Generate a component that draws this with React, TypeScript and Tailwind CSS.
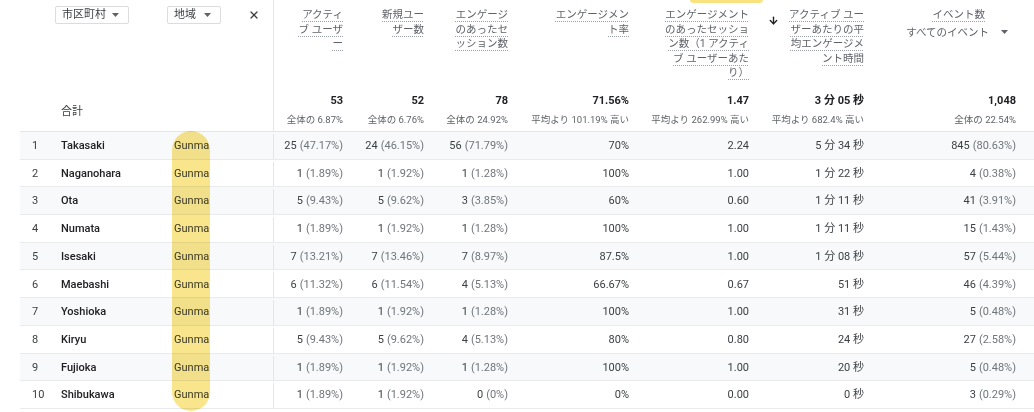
import { ArrowDown, X } from "lucide-react";

type Row = {
  n: number;
  city: string;
  cells: [string, string][];
};

const rows: Row[] = [
  { n: 1, city: "Takasaki", cells: [["25", "(47.17%)"], ["24", "(46.15%)"], ["56", "(71.79%)"], ["70%", ""], ["2.24", ""], ["5 分 34 秒", ""], ["845", "(80.63%)"]] },
  { n: 2, city: "Naganohara", cells: [["1", "(1.89%)"], ["1", "(1.92%)"], ["1", "(1.28%)"], ["100%", ""], ["1.00", ""], ["1 分 22 秒", ""], ["4", "(0.38%)"]] },
  { n: 3, city: "Ota", cells: [["5", "(9.43%)"], ["5", "(9.62%)"], ["3", "(3.85%)"], ["60%", ""], ["0.60", ""], ["1 分 11 秒", ""], ["41", "(3.91%)"]] },
  { n: 4, city: "Numata", cells: [["1", "(1.89%)"], ["1", "(1.92%)"], ["1", "(1.28%)"], ["100%", ""], ["1.00", ""], ["1 分 11 秒", ""], ["15", "(1.43%)"]] },
  { n: 5, city: "Isesaki", cells: [["7", "(13.21%)"], ["7", "(13.46%)"], ["7", "(8.97%)"], ["87.5%", ""], ["1.00", ""], ["1 分 08 秒", ""], ["57", "(5.44%)"]] },
  { n: 6, city: "Maebashi", cells: [["6", "(11.32%)"], ["6", "(11.54%)"], ["4", "(5.13%)"], ["66.67%", ""], ["0.67", ""], ["51 秒", ""], ["46", "(4.39%)"]] },
  { n: 7, city: "Yoshioka", cells: [["1", "(1.89%)"], ["1", "(1.92%)"], ["1", "(1.28%)"], ["100%", ""], ["1.00", ""], ["31 秒", ""], ["5", "(0.48%)"]] },
  { n: 8, city: "Kiryu", cells: [["5", "(9.43%)"], ["5", "(9.62%)"], ["4", "(5.13%)"], ["80%", ""], ["0.80", ""], ["24 秒", ""], ["27", "(2.58%)"]] },
  { n: 9, city: "Fujioka", cells: [["1", "(1.89%)"], ["1", "(1.92%)"], ["1", "(1.28%)"], ["100%", ""], ["1.00", ""], ["20 秒", ""], ["5", "(0.48%)"]] },
  { n: 10, city: "Shibukawa", cells: [["1", "(1.89%)"], ["1", "(1.92%)"], ["0", "(0%)"], ["0%", ""], ["0.00", ""], ["0 秒", ""], ["3", "(0.29%)"]] },
];

// widths + right padding of the 7 metric columns
const cols = [
  "w-[78px] pr-[8px] border-l border-[#e3e5e8]",
  "w-[81px] pr-[8px]",
  "w-[84px] pr-[8px]",
  "w-[121px] pr-[8px]",
  "w-[120px] pr-[8px]",
  "w-[115px] pr-[8px]",
  "w-[162px] pr-[18px]",
];

const totals: [string, string][] = [
  ["53", "全体の 6.87%"],
  ["52", "全体の 6.76%"],
  ["78", "全体の 24.92%"],
  ["71.56%", "平均より 101.19% 高い"],
  ["1.47", "平均より 262.99% 高い"],
  ["3 分 05 秒", "平均より 682.4% 高い"],
  ["1,048", "全体の 22.54%"],
];

function Label({ lines }: { lines: string[] }) {
  return (
    <div className="flex flex-col items-end text-[10.5px] leading-[14.5px] text-[#5f6368]">
      {lines.map((l) => (
        <span
          key={l}
          className="whitespace-nowrap underline decoration-dotted decoration-[#9aa0a6] underline-offset-[3px]"
        >
          {l}
        </span>
      ))}
    </div>
  );
}

function Caret() {
  return (
    <svg width="7" height="4" viewBox="0 0 7 4" className="fill-[#5f6368]">
      <path d="M0 0h7L3.5 4z" />
    </svg>
  );
}

export default function App() {
  const labels: React.ReactNode[] = [
    <Label lines={["アクティ", "ブ ユーザ", "ー"]} />,
    <Label lines={["新規ユー", "ザー数"]} />,
    <Label lines={["エンゲージ", "のあったセ", "ッション数"]} />,
    <Label lines={["エンゲージメン", "ト率"]} />,
    <Label lines={["エンゲージメント", "のあったセッショ", "ン数（1 アクティ", "ブ ユーザーあた", "り）"]} />,
    <div className="flex items-start gap-[10px]">
      <ArrowDown className="mt-[7px] h-[11px] w-[11px] text-[#202124]" strokeWidth={3} />
      <Label lines={["アクティブ ユー", "ザーあたりの平", "均エンゲージメ", "ント時間"]} />
    </div>,
    <div className="flex flex-col items-end">
      <div className="mr-[31px]">
        <Label lines={["イベント数"]} />
      </div>
      <div className="mt-[2px] flex items-center gap-[12px] pr-[8px] text-[10.5px] text-[#5f6368]">
        <span>すべてのイベント</span>
        <Caret />
      </div>
    </div>,
  ];

  return (
    <div className="relative h-[412px] w-[1034px] overflow-hidden bg-white font-['Roboto','Noto_Sans_CJK_JP',sans-serif] text-[11px] text-[#3c4043]">
      <div className="ml-[20px] flex flex-col">
        {/* header */}
        <div className="flex h-[132px] border-b border-[#e3e5e8]">
          <div className="flex w-[253px] flex-col justify-between pb-[11px] pl-[35px] pt-[6px]">
            <div className="flex items-center">
              <div className="flex h-[18px] w-[74px] items-center justify-between rounded-[2px] border border-[#dadce0] pl-[6px] pr-[9px] text-[11px] text-[#3c4043]">
                <span>市区町村</span>
                <Caret />
              </div>
              <div className="ml-[38px] flex h-[18px] w-[54px] items-center justify-between rounded-[2px] border border-[#dadce0] pl-[6px] pr-[9px] text-[11px] text-[#3c4043]">
                <span>地域</span>
                <Caret />
              </div>
              <X className="ml-[27px] h-[12px] w-[12px] text-[#3c4043]" strokeWidth={2.5} />
            </div>
            <div className="pl-[6px] text-[11px] text-[#3c4043]">合計</div>
          </div>
          {cols.map((c, i) => (
            <div key={i} className={`${c} flex flex-col items-end justify-between pb-[4px] pt-[8px]`}>
              {labels[i]}
              <div className="flex flex-col items-end">
                <span className="text-[11px] font-bold text-[#202124]">{totals[i][0]}</span>
                <span className="mt-[3px] whitespace-nowrap text-[9.5px] text-[#5f6368]">{totals[i][1]}</span>
              </div>
            </div>
          ))}
        </div>

        {/* rows */}
        {rows.map((r) => (
          <div
            key={r.n}
            className={`flex h-[27.7px] items-center border-b border-[#e8eaed] pt-[2px] ${r.n % 2 === 1 ? "bg-[#f8f9fa]" : "bg-white"}`}
          >
            <div className="w-[35px] pl-[12px] text-[#3c4043]">{r.n}</div>
            <div className="w-[113px] pl-[6px] font-medium text-[#202124]">{r.city}</div>
            <div className="w-[105px] pl-[6px] text-[#3c4043]">Gunma</div>
            {r.cells.map((cell, i) => (
              <div key={i} className={`${cols[i]} flex h-full items-center justify-end whitespace-nowrap`}>
                <span className="text-[#3c4043]">{cell[0]}</span>
                {cell[1] && <span className="ml-[3px] text-[#70757a]">{cell[1]}</span>}
              </div>
            ))}
          </div>
        ))}
      </div>

      {/* highlighter marks */}
      <div className="pointer-events-none absolute left-[172px] top-[131px] h-[280px] w-[38px] rounded-full bg-[#f9e27f] opacity-90 mix-blend-multiply" />
      <div className="pointer-events-none absolute left-[690px] top-[-4px] h-[7px] w-[73px] rounded-full bg-[#f9e27f] mix-blend-multiply" />
    </div>
  );
}
